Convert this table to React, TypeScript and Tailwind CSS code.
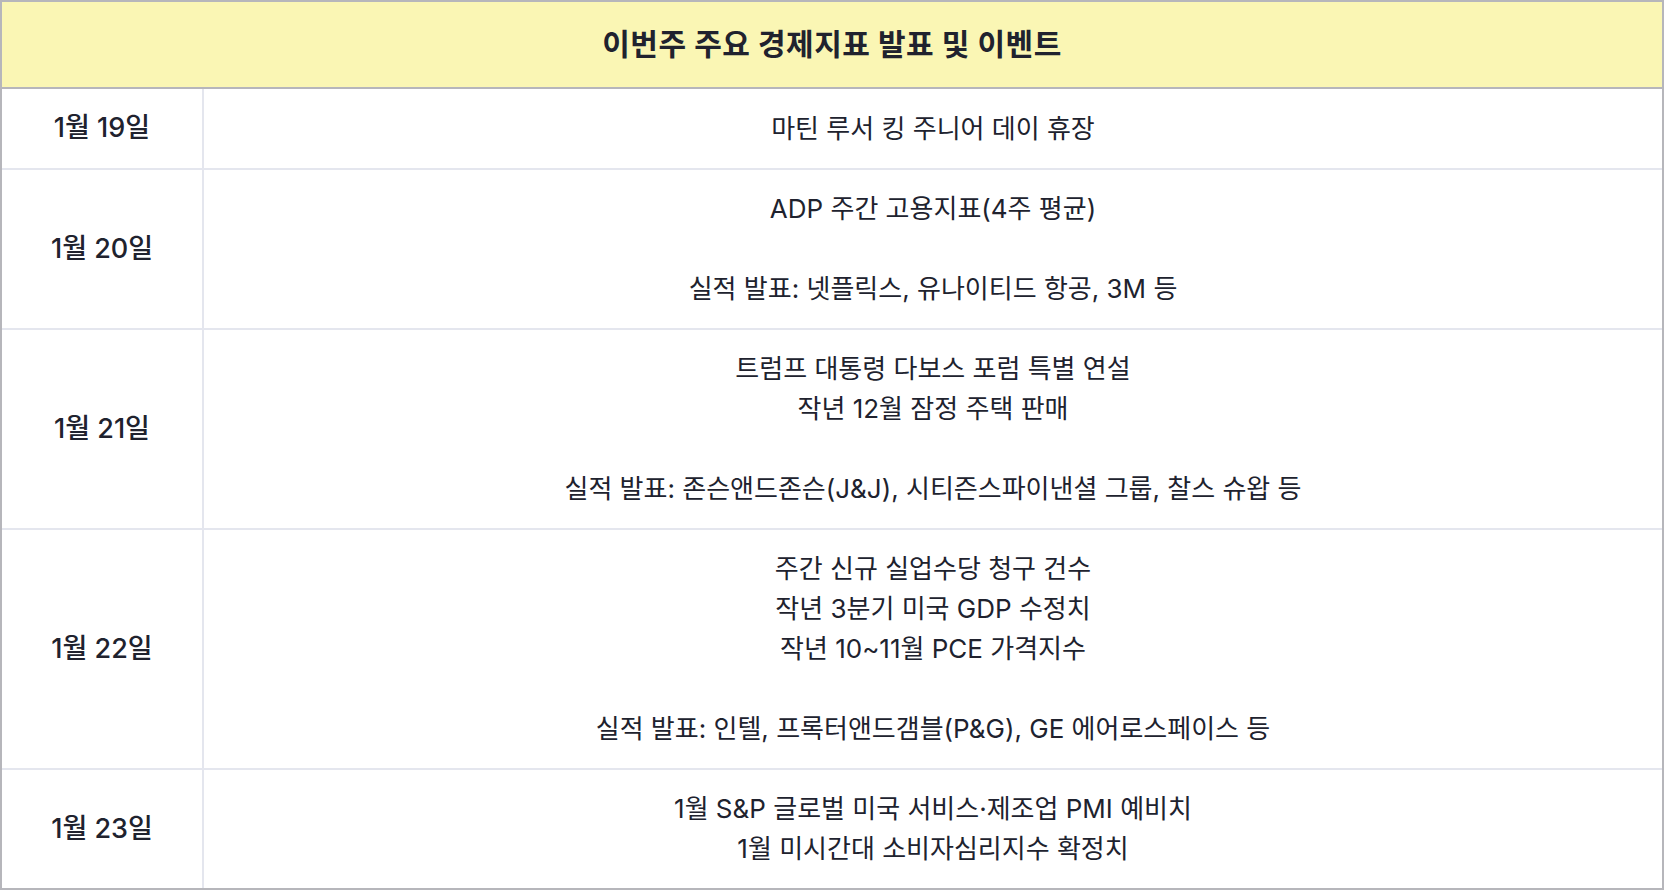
const rows: { date: string; lines: string[] }[] = [
  { date: '1월 19일', lines: ['마틴 루서 킹 주니어 데이 휴장'] },
  { date: '1월 20일', lines: ['ADP 주간 고용지표(4주 평균)', '', '실적 발표: 넷플릭스, 유나이티드 항공, 3M 등'] },
  {
    date: '1월 21일',
    lines: [
      '트럼프 대통령 다보스 포럼 특별 연설',
      '작년 12월 잠정 주택 판매',
      '',
      '실적 발표: 존슨앤드존슨(J&J), 시티즌스파이낸셜 그룹, 찰스 슈왑 등',
    ],
  },
  {
    date: '1월 22일',
    lines: [
      '주간 신규 실업수당 청구 건수',
      '작년 3분기 미국 GDP 수정치',
      '작년 10~11월 PCE 가격지수',
      '',
      '실적 발표: 인텔, 프록터앤드갬블(P&G), GE 에어로스페이스 등',
    ],
  },
  { date: '1월 23일', lines: ['1월 S&P 글로벌 미국 서비스·제조업 PMI 예비치', '1월 미시간대 소비자심리지수 확정치'] },
]

export default function App() {
  return (
    <div className="w-[1664px] h-[892px] bg-white font-['Inter','Noto_Sans_CJK_KR',sans-serif] text-[#20222e]">
      <div className="border-2 border-[#b6b6bb]">
        <div className="h-[87px] flex items-center justify-center bg-[#faf6b4] border-b-2 border-[#b6b6bb]">
          <h1 className="text-[30px] font-bold tracking-[0.5px]">이번주 주요 경제지표 발표 및 이벤트</h1>
        </div>
        {rows.map((row, i) => (
          <div
            key={row.date}
            className={
              i < rows.length - 1 ? 'flex border-b-2 border-[#e4e6ee]' : 'flex'
            }
          >
            <div className="w-[202px] shrink-0 border-r-2 border-[#e4e6ee] flex items-center justify-center text-[27px] font-medium">
              {row.date}
            </div>
            <div
              className={
                i === 0
                  ? 'flex-1 pt-[20px] pb-[19px] text-center text-[26px] leading-[40px]'
                  : 'flex-1 py-[19px] text-center text-[26px] leading-[40px]'
              }
            >
              {row.lines.map((line, j) => (
                <div key={j} className="h-[40px]">
                  {line}
                </div>
              ))}
            </div>
          </div>
        ))}
      </div>
    </div>
  )
}
